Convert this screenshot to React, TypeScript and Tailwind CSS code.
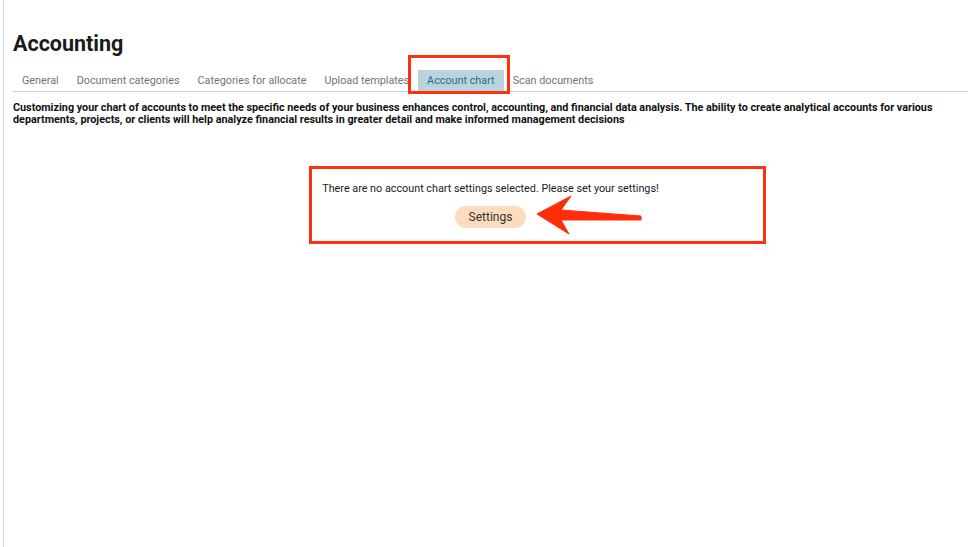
import React from 'react';

const tabs = ['General', 'Document categories', 'Categories for allocate', 'Upload templates', 'Account chart', 'Scan documents'];

const App = () => {
  const active = 'Account chart';

  return (
    <div className="relative min-h-[547px] bg-white font-['Roboto',sans-serif] text-[#111]">
      <div className="ml-[3px] min-h-[547px] border-l border-[#d3dfe4] pl-[9px]">
        <h1 className="pt-[31px] text-[21.5px] font-bold leading-[26px] text-[#1b1b1b]">Accounting</h1>

        <div className="mt-[13px] flex border-b border-[#c6d8df]">
          {tabs.map((tab) => (
            <div
              key={tab}
              className={
                tab === active
                  ? 'bg-[#bad4dd] px-[9px] text-[10.8px] leading-[21px] text-[#2b6c88]'
                  : 'px-[9px] text-[10.8px] leading-[21px] text-[#747474]'
              }
            >
              {tab}
            </div>
          ))}
        </div>

        <p className="mt-[10px] pr-[8px] text-[10.8px] font-bold leading-[12px] text-[#111]">
          Customizing your chart of accounts to meet the specific needs of your business enhances control, accounting, and
          financial data analysis. The ability to create analytical accounts for various departments, projects, or clients
          will help analyze financial results in greater detail and make informed management decisions
        </p>

        <div className="mt-[56px] flex flex-col items-center">
          <p className="text-[10.8px] leading-[13px] text-[#1a1a1a]">
            There are no account chart settings selected. Please set your settings!
          </p>
          <button className="mt-[11px] h-[22px] rounded-full bg-[#fddbbd] px-[14px] text-[12px] text-[#333]">
            Settings
          </button>
        </div>
      </div>

      {/* annotations */}
      <div className="absolute left-[408px] top-[55px] h-[39px] w-[102px] border-[3px] border-[#ff2f0f]" />
      <div className="absolute left-[309px] top-[166px] h-[78px] w-[457px] border-[3px] border-[#ff2f0f]" />
      <svg className="absolute left-0 top-0" width="968" height="547" viewBox="0 0 968 547">
        <polygon
          points="537,214 571,196 561,210 641,216 641,220 561,220 569,234"
          fill="#ff2d0a"
          stroke="#ff2d0a"
          strokeWidth="1"
          strokeLinejoin="round"
        />
      </svg>
    </div>
  );
};

export default App;
